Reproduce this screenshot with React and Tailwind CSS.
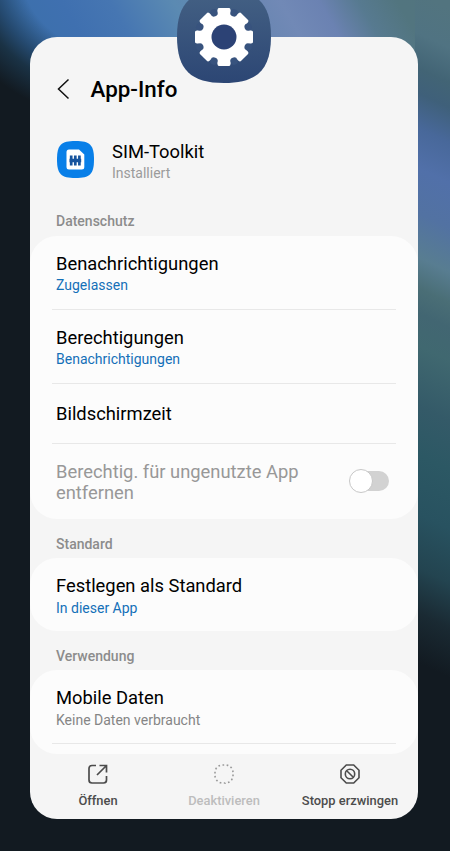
import React from "react";

const row = "flex flex-col px-[26px]";
const title = "text-[18.35px] leading-[22px] text-black";
const blue = "text-[14px] leading-[18px] text-[#1470b8] mt-px";

function Divider() {
  return <div className="mx-[22px] h-px shrink-0 bg-[#e8e8e8]" />;
}

function Section({ children, className }) {
  return (
    <h2 className={"flex items-center px-[26px] text-[14px] font-medium leading-[18px] text-[#8c8c8c] " + className}>
      {children}
    </h2>
  );
}

function Gear() {
  return (
    <svg className="h-[60px] w-[60px]" viewBox="-30 -30 60 60">
      <circle r="25" fill="#fff" />
      {[0, 45, 90, 135, 180, 225, 270, 315].map((a) => (
        <path key={a} transform={`rotate(${a})`} d="M-8-20L-6.300-28Q-6-29-5-29H5Q6-29 6.300-28L8-20Z" fill="#fff" />
      ))}
      {[0, 45, 90, 135, 180, 225, 270, 315].map((a) => (
        <circle key={a} cx="0" cy="-26.200" r="3.700" transform={`rotate(${a + 22.5})`} fill="#38537e" />
      ))}
      <circle r="12.500" fill="#2c4275" />
    </svg>
  );
}

function Action({ label, icon, className }) {
  return (
    <button className={"flex w-[126px] flex-col items-center " + className}>
      {icon}
      <span className="mt-[7px] whitespace-nowrap text-[12.9px] font-medium leading-[17px]">{label}</span>
    </button>
  );
}

export default function App() {
  return (
    <main className="relative h-[851px] w-[450px] overflow-hidden bg-[#121a21] pl-[30px] pt-[37px] font-['Roboto',sans-serif]">
      <div className="absolute inset-x-0 top-0 h-[64px] bg-[linear-gradient(60deg,#3970a8_0%,#3f70b0_20%,#4676b2_30%,#5b8ab2_43%,#6685b0_55%,#7189b6_65%,#6b82b2_73%,#577a90_81%,#52757f_89%,#52747f_100%)]" />
      <div className="absolute left-0 top-0 h-[200px] w-[120px] bg-[radial-gradient(ellipse_160px_135px_at_120px_-30px,transparent_62%,#254a70_80%,#1a3245_92%,#121a21_112%)]" />
      <div className="absolute -bottom-[20px] -right-px -top-[20px] w-[36px] skew-y-[25deg] bg-[linear-gradient(180deg,#52747f_20px,#507382_60px,#426475_95px,#3f607a_120px,#48689a_155px,#5170a9_195px,#5272a2_240px,#587d91_284px,#4a6e76_315px,#426672_340px,#406870_373px,#345a68_433px,#2c5864_482px,#285260_541px,#234450_595px,#1a2a33_640px,#121a21_690px)]" />

      <section className="relative flex h-[782px] w-[388px] flex-col overflow-hidden rounded-[27px] bg-[#f5f5f5]">
        <header className="flex h-[84px] items-center pl-[27px] pt-[20px]">
          <svg className="h-[22px] w-[13px]" viewBox="0 0 13 22" fill="none" stroke="#111" strokeWidth="1.500">
            <path d="M11.500 1.500L1.500 11L11.500 20.500" />
          </svg>
          <h1 className="ml-[20.5px] text-[22.4px] font-medium leading-[28px] text-black">App-Info</h1>
        </header>
        <div className="flex h-[78px] items-center pl-[27px]">
          <svg className="-mt-px h-[37px] w-[37px]" viewBox="0 0 37 37">
            <path d="M18.500 0C33 0 37 4 37 18.500S33 37 18.500 37 0 33 0 18.500 4 0 18.500 0Z" fill="#087fe8" />
            <path d="M12 8.500H22L27.300 13.500V26Q27.300 28.500 24.800 28.500H12Q9.500 28.500 9.500 26V11Q9.500 8.500 12 8.500Z" fill="#fff" />
            <path d="M14.200 14.500V24.500M18.300 14.500V24.500M22.400 14.500V24.500" stroke="#17549e" strokeWidth="2.700" />
            <path d="M12.500 19.500H24.200" stroke="#17549e" strokeWidth="3.500" />
          </svg>
          <div className="ml-[18px] flex flex-col pt-[3px]">
            <span className="text-[18.35px] leading-[22px] text-black">SIM-Toolkit</span>
            <span className="mt-px text-[14px] leading-[18px] text-[#9b9b9b]">Installiert</span>
          </div>
        </div>
        <Section className="h-[37px] pt-[6px]">Datenschutz</Section>
        <div className="flex h-[283px] shrink-0 flex-col rounded-[27px] bg-[#fcfcfc]">
          <div className={row + " h-[73px] pt-[17px]"}>
            <span className={title}>Benachrichtigungen</span>
            <span className={blue}>Zugelassen</span>
          </div>
          <Divider />
          <div className={row + " h-[73px] pt-[17px]"}>
            <span className={title}>Berechtigungen</span>
            <span className={blue}>Benachrichtigungen</span>
          </div>
          <Divider />
          <div className={row + " h-[59px] justify-center pt-px"}>
            <span className={title}>Bildschirmzeit</span>
          </div>
          <Divider />
          <div className="flex h-[75px] items-center justify-between pl-[26px] pr-[29px]">
            <p className="w-[260px] pt-px text-[18.35px] leading-[21px] text-[#989898]">
              Berechtig. für ungenutzte App entfernen
            </p>
            <div className="mb-px flex h-[20px] w-[39px] items-center rounded-full bg-[#d2d2d2]">
              <span className="-ml-px h-[24px] w-[24px] shrink-0 rounded-full border border-[#c7c7c7] bg-white" />
            </div>
          </div>
        </div>
        <Section className="h-[39px] shrink-0 pt-[11px]">Standard</Section>
        <div className={row + " h-[73px] shrink-0 rounded-[27px] bg-[#fcfcfc] pt-[17px]"}>
          <span className={title}>Festlegen als Standard</span>
          <span className="mt-[2px] text-[14px] leading-[18px] text-[#1470b8]">In dieser App</span>
        </div>
        <Section className="h-[39px] shrink-0 pt-[11px]">Verwendung</Section>
        <div className="flex h-[84px] shrink-0 flex-col rounded-[27px] bg-[#fcfcfc]">
          <div className={row + " h-[73px] pt-[17px]"}>
            <span className={title}>Mobile Daten</span>
            <span className="mt-[2px] text-[14px] leading-[18px] text-[#858585]">Keine Daten verbraucht</span>
          </div>
          <Divider />
        </div>
        <footer className="flex h-[65px] justify-center pt-[9px] text-[#4c4c4c]">
          <Action
            label="Öffnen"
            className=""
            icon={
              <svg className="h-[22px] w-[22px]" viewBox="0 0 22 22" fill="none" stroke="currentColor" strokeWidth="1.700">
                <path d="M9 2.500H5Q2 2.500 2 5.500V17Q2 20 5 20H16.500Q19.500 20 19.500 17V13M12.500 2.500H19.500V9.500M19 3L10 12" />
              </svg>
            }
          />
          <Action
            label="Deaktivieren"
            className="text-[#bdbdbd]"
            icon={
              <svg className="h-[22px] w-[22px]" viewBox="0 0 22 22" fill="none" stroke="#999" strokeWidth="1.600">
                <rect x="2" y="2" width="18" height="18" rx="7.500" pathLength="56" strokeDasharray="1.600 2.400" />
              </svg>
            }
          />
          <Action
            label="Stopp erzwingen"
            className=""
            icon={
              <svg className="h-[22px] w-[22px]" viewBox="0 0 22 22" fill="none" stroke="currentColor" strokeWidth="1.600">
                <path d="M7.300 2H14.700L20 7.300V14.700L14.700 20H7.300L2 14.700V7.300Z" />
                <circle cx="11" cy="11" r="4.700" />
                <path d="M7.700 7.700L14.300 14.300" />
              </svg>
            }
          />
        </footer>
      </section>

      <div className="absolute left-[177px] top-[-10px] flex h-[93px] w-[94px] items-center justify-center">
        <svg className="absolute inset-0 h-full w-full" viewBox="0 0 94 93">
          <defs>
            <linearGradient id="tile" x1="0" y1="0" x2="0" y2="1">
              <stop offset="0" stopColor="#446184" />
              <stop offset="1" stopColor="#2c4674" />
            </linearGradient>
          </defs>
          <path d="M47 0C80 0 94 13 94 46.500S80 93 47 93 0 80 0 46.500 14 0 47 0Z" fill="url(#tile)" />
        </svg>
        <div className="relative flex">
          <Gear />
        </div>
      </div>
    </main>
  );
}
